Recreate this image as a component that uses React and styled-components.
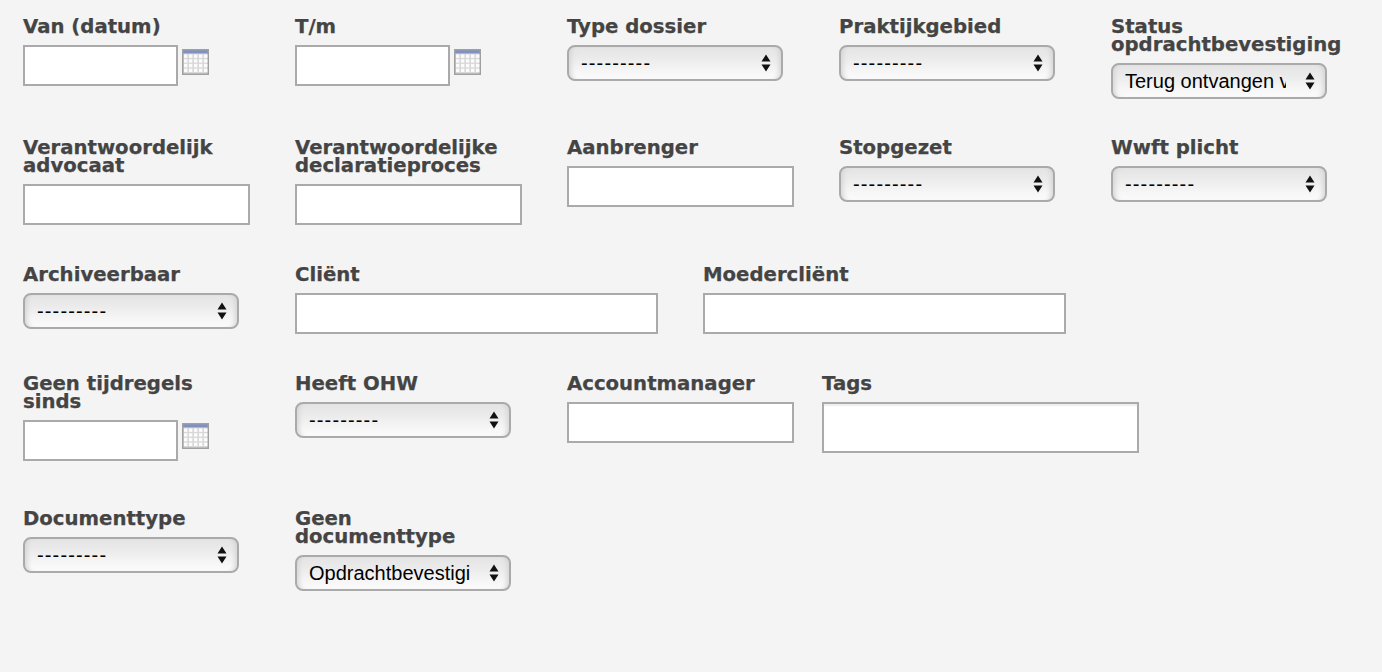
import React from 'react'
import styled, { createGlobalStyle } from 'styled-components'

const GlobalStyle = createGlobalStyle`
  html, body {
    margin: 0;
    padding: 0;
    background: #f4f4f4;
  }
`

const Page = styled.div`
  padding: 17px 0 0 23px;
  height: 655px;
  overflow: hidden;
`

const Row = styled.div`
  display: flex;
  align-items: flex-start;
  margin-bottom: ${props => props.$gap}px;
`

const Field = styled.div`
  flex: none;
  width: ${props => props.$width || 272}px;
`

const Label = styled.label`
  display: block;
  width: ${props => props.$width ? `${props.$width}px` : 'auto'};
  padding-top: 1px;
  margin-bottom: 9px;
  font-family: "DejaVu Sans", Verdana, sans-serif;
  font-size: 19.7px;
  font-weight: 700;
  line-height: 18px;
  color: #444;
  -webkit-text-stroke: 0.25px #444;
`

const InputRow = styled.div`
  display: flex;
  align-items: flex-start;
  gap: 4px;
`

const TextInput = styled.input`
  display: block;
  box-sizing: border-box;
  width: ${props => props.$width || 227}px;
  height: ${props => props.$height || 41}px;
  margin: 0;
  padding: 0 4px;
  background: #fff;
  border: 2px solid #aaa;
  border-radius: 0;
  outline: none;
  box-shadow: ${props => props.$inset ? 'inset 0 2px 1px #efefef' : 'none'};
`

const SelectWrap = styled.div`
  position: relative;
  width: 216px;
  height: 36px;
`

const NativeSelect = styled.select`
  display: block;
  box-sizing: border-box;
  width: 100%;
  height: 100%;
  margin: 0;
  padding: 0 39px 0 12px;
  appearance: none;
  border: 2px solid #aaa;
  border-radius: 8px;
  background: linear-gradient(#e4e4e4 0%, #ebebeb 35%, #f6f6f6 75%, #fbfbfb 100%);
  box-shadow: inset 6px 0 5px -4px #d4d4d4, inset -6px 0 5px -4px #d4d4d4;
  outline: none;
  font-family: "Liberation Sans", Arial, sans-serif;
  font-size: 20px;
  letter-spacing: ${props => props.$empty ? '1.14px' : '0'};
  color: #000;
`

const Arrows = styled.svg`
  position: absolute;
  top: 9px;
  right: 12px;
  width: 10px;
  height: 18px;
  pointer-events: none;
`

const Calendar = styled.svg`
  flex: none;
  margin-top: ${props => props.$top || 4}px;
`

const CalendarIcon = ({ top }) => (
  <Calendar $top={top} width="27" height="26" viewBox="0 0 27 26">
    <rect width="27" height="26" fill="#a0a0a0" />
    <rect x="1.5" y="1.5" width="24" height="3" fill="#7f90c4" />
    <rect x="1.5" y="4.5" width="24" height="20" fill="#d8d8d8" />
    {[2, 7, 12, 17, 22].map(x =>
      [5.5, 10.2, 14.9, 19.6].map(y => (
        <rect key={`${x}-${y}`} x={x} y={y} width="3.4" height="3.4" fill="#fbfbfb" />
      ))
    )}
  </Calendar>
)

const Select = ({ value = '---------' }) => (
  <SelectWrap>
    <NativeSelect defaultValue={value} $empty={value === '---------'}>
      <option>{value}</option>
    </NativeSelect>
    <Arrows viewBox="0 0 10 18">
      <path d="M5 0.5 L9.5 7.5 L0.5 7.5 Z M5 17.5 L9.5 10.5 L0.5 10.5 Z" fill="#111" />
    </Arrows>
  </SelectWrap>
)

const App = () => (
  <Page>
    <GlobalStyle />
    <Row $gap={39}>
      <Field>
        <Label>Van (datum)</Label>
        <InputRow><TextInput $width={155} /><CalendarIcon /></InputRow>
      </Field>
      <Field>
        <Label>T/m</Label>
        <InputRow><TextInput $width={155} /><CalendarIcon /></InputRow>
      </Field>
      <Field>
        <Label>Type dossier</Label>
        <Select />
      </Field>
      <Field>
        <Label>Praktijkgebied</Label>
        <Select />
      </Field>
      <Field>
        <Label>Status opdrachtbevestiging</Label>
        <Select value="Terug ontvangen van client" />
      </Field>
    </Row>
    <Row $gap={40}>
      <Field>
        <Label>Verantwoordelijk advocaat</Label>
        <TextInput />
      </Field>
      <Field>
        <Label>Verantwoordelijke declaratieproces</Label>
        <TextInput />
      </Field>
      <Field>
        <Label>Aanbrenger</Label>
        <TextInput />
      </Field>
      <Field>
        <Label>Stopgezet</Label>
        <Select />
      </Field>
      <Field>
        <Label>Wwft plicht</Label>
        <Select />
      </Field>
    </Row>
    <Row $gap={40}>
      <Field>
        <Label>Archiveerbaar</Label>
        <Select />
      </Field>
      <Field $width={408}>
        <Label>Cliënt</Label>
        <TextInput $width={363} />
      </Field>
      <Field $width={408}>
        <Label>Moedercliënt</Label>
        <TextInput $width={363} />
      </Field>
    </Row>
    <Row $gap={48}>
      <Field>
        <Label $width={190}>Geen tijdregels sinds</Label>
        <InputRow><TextInput $width={155} /><CalendarIcon top={3} /></InputRow>
      </Field>
      <Field>
        <Label>Heeft OHW</Label>
        <Select />
      </Field>
      <Field $width={255}>
        <Label>Accountmanager</Label>
        <TextInput />
      </Field>
      <Field $width={320}>
        <Label>Tags</Label>
        <TextInput $width={317} $height={51} $inset />
      </Field>
    </Row>
    <Row $gap={0}>
      <Field>
        <Label>Documenttype</Label>
        <Select />
      </Field>
      <Field>
        <Label $width={190}>Geen documenttype</Label>
        <Select value="Opdrachtbevestiging" />
      </Field>
    </Row>
  </Page>
)

export default App
